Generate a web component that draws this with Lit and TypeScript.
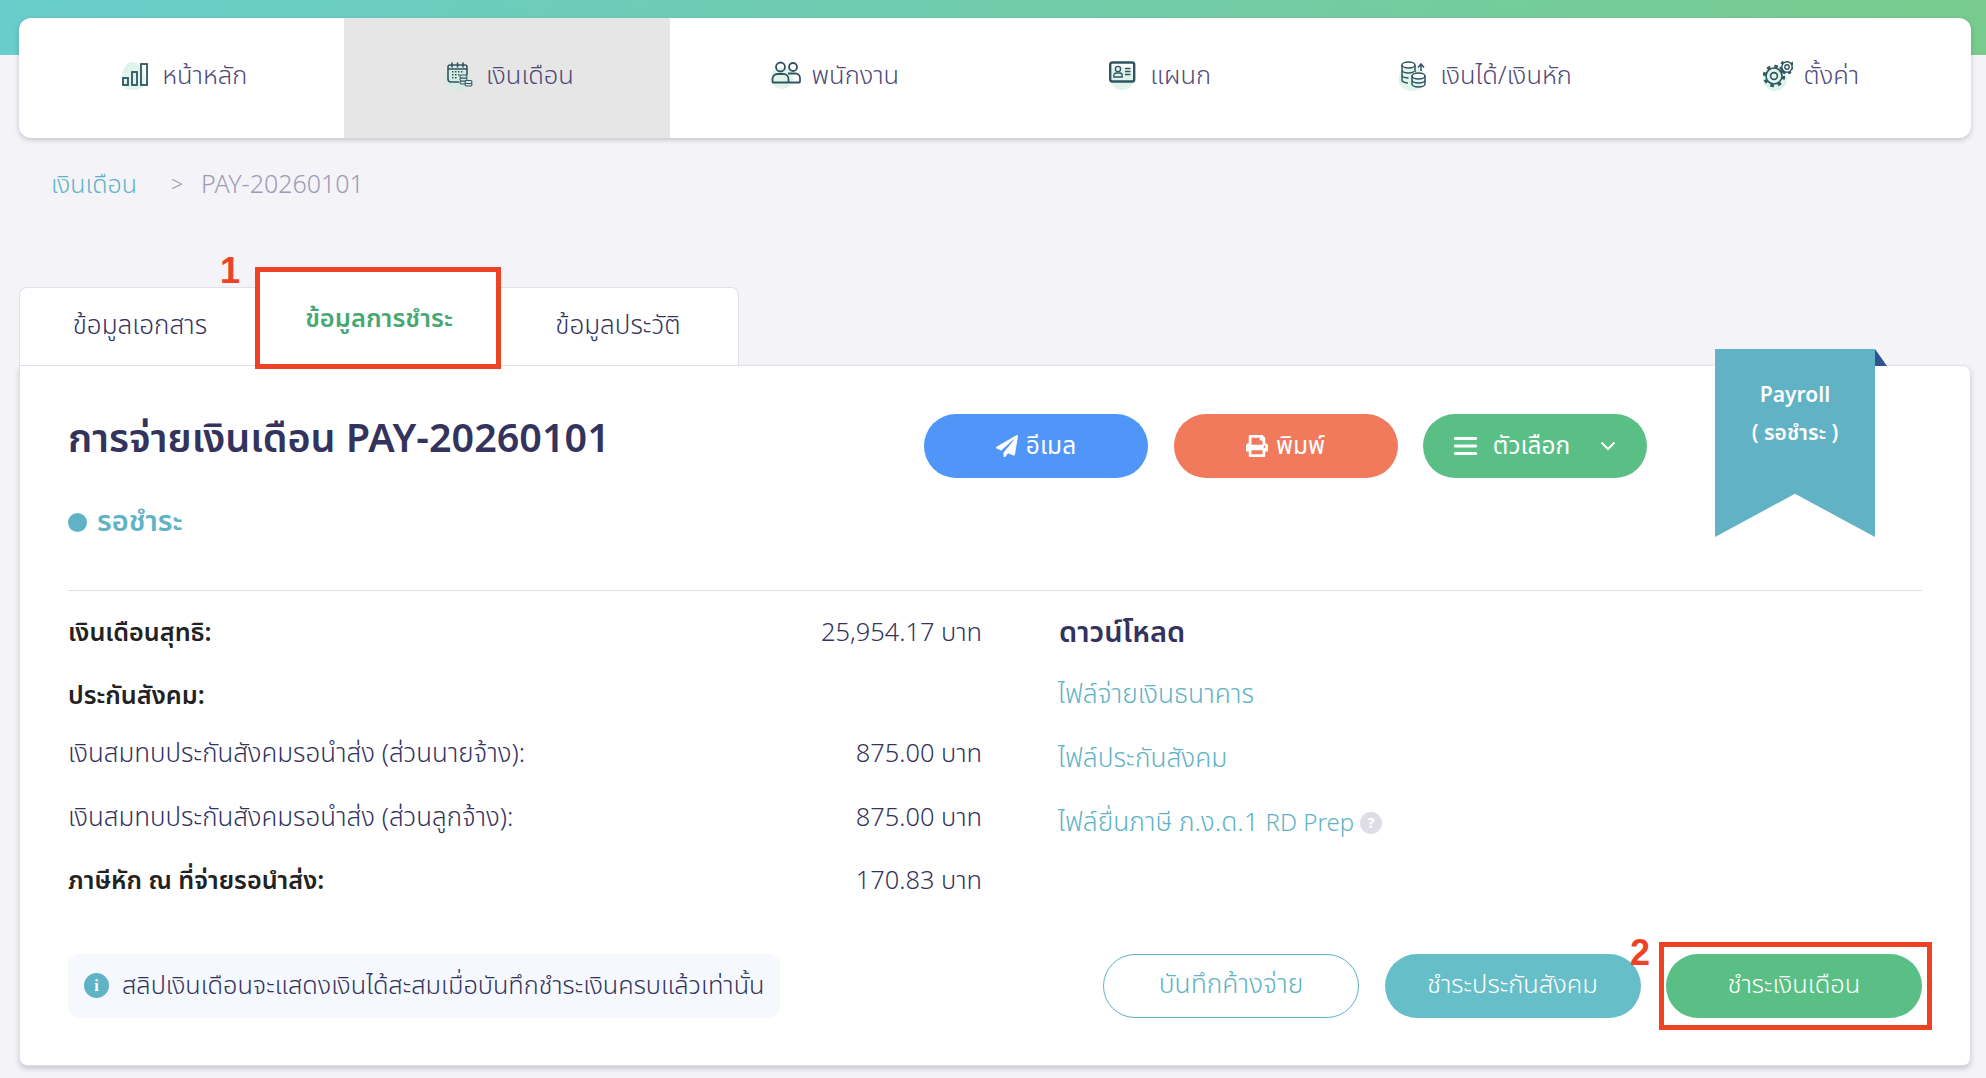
import { LitElement, html, css, svg } from "lit";
import { customElement } from "lit/decorators.js";

const ink = "#2f5560";

const icons = {
  home: svg`<path class="blob" d="M1 20C0 10 5 1 11 1s12 8 13 15-3 13-11 13S2 27 1 20z"/>
    <g fill="none" stroke="${ink}" stroke-width="1.800"><rect x="2" y="17" width="5" height="7"/><rect x="11" y="11" width="5" height="13"/><rect x="20" y="3" width="6" height="21"/></g>`,
  salary: svg`<path class="blob" d="M0 18C0 10 8 7 15 9s12 7 9 13-8 8-13 7-11-4-11-11z"/>
    <g fill="none" stroke="${ink}" stroke-width="1.600"><path d="M14 21H6a3 3 0 0 1-3-3V6a2 2 0 0 1 2-2h15a2 2 0 0 1 2 2v8"/><path d="M3 8h19M7 1.500v5M12.500 1.500v5M18 1.500v5"/></g>
    <g fill="${ink}"><rect x="7" y="10" width="1.500" height="1.500"/><rect x="10" y="10" width="1.500" height="1.500"/><rect x="13" y="10" width="1.500" height="1.500"/><rect x="16" y="10" width="1.500" height="1.500"/><rect x="7" y="13" width="1.500" height="1.500"/><rect x="10" y="13" width="1.500" height="1.500"/><rect x="13" y="13" width="1.500" height="1.500"/><rect x="7" y="16" width="1.500" height="1.500"/><rect x="10" y="16" width="1.500" height="1.500"/></g>
    <g fill="#dfe8e6" stroke="${ink}" stroke-width="1.100"><rect x="15" y="20" width="7" height="3" rx="1.500"/><rect x="15" y="17" width="7" height="3" rx="1.500"/><rect x="15" y="14" width="7" height="3" rx="1.500"/><rect x="20" y="22" width="7" height="3" rx="1.500"/><rect x="20" y="19.500" width="7" height="3" rx="1.500"/></g>`,
  staff: svg`<ellipse class="blob" cx="11" cy="17" rx="11" ry="11"/>
    <g fill="none" stroke="${ink}" stroke-width="1.800"><circle cx="9.500" cy="6" r="4.500"/><path d="M1.500 21v-3a5 5 0 0 1 5-5h6a5 5 0 0 1 5 5v3a.5.5 0 0 1-.5.5H2z"/><circle cx="22" cy="6" r="4"/><path d="M17 12.500h7.500a4.500 4.500 0 0 1 4.500 4.500v3.500a1 1 0 0 1-1 1H18"/></g>`,
  dept: svg`<path class="blob" d="M0 15C0 7 6 5 13 6s14 3 13 11-6 12-13 12S0 23 0 15z"/>
    <rect x="1.200" y="1.500" width="24" height="19" rx="2" fill="none" stroke="${ink}" stroke-width="2.400"/>
    <g fill="none" stroke="${ink}" stroke-width="1.300"><circle cx="9" cy="8" r="2.600"/><path d="M4.800 16v-1.500a2.500 2.500 0 0 1 2.500-2.500h3.400a2.500 2.500 0 0 1 2.500 2.500V16z"/><path d="M16 7.500h5.500M16 10.500h5.500M16 13.500h5.500"/></g>`,
  income: svg`<ellipse class="blob" cx="13" cy="18" rx="14" ry="12"/>
    <g fill="none" stroke="${ink}" stroke-width="1.500"><ellipse cx="9.500" cy="4" rx="6.500" ry="3"/><path d="M3 4v15c0 1.500 2.500 2.800 6 3M16 4v7M3 9c0 1.700 3 3 6.500 3 2.500 0 4.500-.5 5.500-1.500M3 14c0 1.700 3 3 6.500 3"/>
    <ellipse cx="19.500" cy="15" rx="6.500" ry="3" fill="#f4f8f6"/><path d="M13 15v8c0 1.700 3 3 6.500 3s6.500-1.300 6.500-3v-8M13 19c0 1.700 3 3 6.500 3s6.500-1.300 6.500-3"/><path d="M22 10V4.500M19 6.500l3-3.500 3 3.500"/></g>`,
  gear: svg`<ellipse class="blob" cx="12" cy="18" rx="12" ry="12"/>
    <g fill="none" stroke="${ink}"><circle cx="11" cy="15" r="8" stroke-width="1.600"/><circle cx="11" cy="15" r="9.800" stroke-width="2.800" stroke-dasharray="3.600 4.100"/><circle cx="11" cy="15" r="3.400" stroke-width="1.600"/>
    <circle cx="24" cy="6" r="5.200" stroke-width="1.400"/><circle cx="24" cy="6" r="6.400" stroke-width="2.200" stroke-dasharray="2.800 2.900"/><circle cx="24" cy="6" r="2.200" stroke-width="1.400"/></g>`,
};

const navItems = [
  { label: "หน้าหลัก", icon: icons.home },
  { label: "เงินเดือน", icon: icons.salary, active: true },
  { label: "พนักงาน", icon: icons.staff },
  { label: "แผนก", icon: icons.dept },
  { label: "เงินได้/เงินหัก", icon: icons.income },
  { label: "ตั้งค่า", icon: icons.gear },
];

const rows = [
  { label: "เงินเดือนสุทธิ:", value: "25,954.17 บาท", bold: true },
  { label: "ประกันสังคม:", value: "", bold: true },
  { label: "เงินสมทบประกันสังคมรอนำส่ง (ส่วนนายจ้าง):", value: "875.00 บาท" },
  { label: "เงินสมทบประกันสังคมรอนำส่ง (ส่วนลูกจ้าง):", value: "875.00 บาท" },
  { label: "ภาษีหัก ณ ที่จ่ายรอนำส่ง:", value: "170.83 บาท", bold: true },
];

@customElement("app-root")
export class AppRoot extends LitElement {
  static styles = css`
    :host {
      display: block;
      box-sizing: border-box;
      min-height: 1078px;
      padding: 18px 15px 0 19px;
      background: linear-gradient(90deg, #69cdcb, #78cb8d) no-repeat top / 100% 55px, #f3f3f8;
      font-family: "Noto Sans Thai", "Noto Sans", "Liberation Sans", sans-serif;
      color: #33335d;
      position: relative;
      overflow: hidden;
    }

    /* Nav */
    .nav {
      display: grid;
      grid-template-columns: repeat(6, 1fr);
      height: 120px;
      background: #fff;
      border-radius: 12px;
      overflow: hidden;
      box-shadow: 0 2px 5px rgba(60, 60, 80, 0.25);
    }
    .nav-item {
      --blob: #e1f4eb;
      display: flex;
      align-items: center;
      justify-content: center;
      gap: 11px;
      padding: 0 0 4px 5px;
      font-size: 25.500px;
      font-weight: 300;
      color: #4f4a78;
    }
    .nav-item.active {
      --blob: #d6ebe0;
      background: #e6e6e6;
    }
    .nav-item svg {
      width: 30px;
      height: 30px;
      flex: none;
    }
    .blob {
      fill: var(--blob);
    }

    /* Breadcrumb */
    .crumbs {
      display: flex;
      align-items: center;
      height: 40px;
      margin-top: 27px;
      padding-left: 32px;
      font-size: 25px;
      font-weight: 300;
      color: #9d9bb3;
    }
    .crumbs a {
      color: #5fb3c5;
    }
    .crumbs .sep {
      margin: 0 18px 0 34px;
      font-size: 21px;
    }

    /* Tabs */
    .tabs {
      display: grid;
      grid-template-columns: 241px 238px 241px;
      align-items: end;
      width: 720px;
      height: 96px;
      margin-top: 65px;
      position: relative;
      z-index: 1;
    }
    .tab {
      display: flex;
      align-items: center;
      justify-content: center;
      height: 79px;
      box-sizing: border-box;
      padding-bottom: 1px;
      background: #fff;
      border: 1px solid #e0e0ea;
      font-size: 26px;
      font-weight: 300;
      color: #33335d;
    }
    .tab:first-child {
      border-radius: 8px 0 0 0;
      border-right: 0;
    }
    .tab:last-child {
      border-radius: 0 8px 0 0;
      border-left: 0;
    }
    .tab.active {
      height: 95px;
      padding: 1px 0 0;
      border: 0;
      font-size: 25.500px;
      font-weight: 600;
      color: #48a874;
    }

    /* Card */
    .card {
      height: 701px;
      box-sizing: border-box;
      margin-top: -1px;
      padding: 48px 48px 47px;
      background: #fff;
      border: 1px solid #e0e0ea;
      border-radius: 0 8px 8px 8px;
      box-shadow: 0 3px 5px rgba(60, 60, 80, 0.22);
      display: flex;
      flex-direction: column;
    }
    .head {
      display: flex;
      justify-content: space-between;
      height: 177px;
      flex: none;
      box-sizing: border-box;
      border-bottom: 1px solid #dfdfe6;
    }
    h1 {
      margin: 1px 0 0;
      font-size: 39.500px;
      line-height: 50px;
      font-weight: 600;
    }
    .status {
      display: flex;
      align-items: center;
      gap: 10px;
      margin-top: 37px;
      font-size: 29px;
      line-height: 40px;
      font-weight: 600;
      color: #5fb3c5;
    }
    .status i {
      width: 19px;
      height: 19px;
      border-radius: 50%;
      background: #5fb3c5;
    }
    .actions {
      display: flex;
      gap: 25.500px;
      margin-right: 275px;
    }
    .btn {
      display: flex;
      align-items: center;
      justify-content: center;
      gap: 8px;
      box-sizing: border-box;
      height: 64px;
      border-radius: 32px;
      font-size: 25.500px;
      color: #fff;
    }
    .actions .btn {
      width: 224px;
      font-size: 24.500px;
    }
    .blue { background: #5096f9; }
    .orange { background: #f1795c; }
    .green { background: #5abf85; }
    .teal { background: #66bec8; }
    .outline {
      border: 1px solid #5fb3c5;
      color: #5fb3c5;
      background: #fff;
    }
    .opt-label {
      margin: 0 22px 0 8px;
    }

    /* Details */
    .body {
      display: grid;
      grid-template-columns: 914px 1fr;
      column-gap: 76px;
      margin-top: 11px;
    }
    .row {
      display: flex;
      justify-content: space-between;
      align-items: center;
      height: 62px;
      font-size: 25.900px;
      font-weight: 300;
    }
    .row:nth-child(2) { margin-top: 1px; }
    .row:nth-child(3) { margin-top: -4px; }
    .row:nth-child(4) { margin-top: 2px; }
    .row:nth-child(5) { margin-top: 1px; }
    .row b {
      font-size: 25.200px;
      font-weight: 600;
      color: #222;
    }
    .row .amount {
      font-size: 25.400px;
    }
    .downloads h2 {
      margin: 0 0 0 1px;
      height: 61px;
      line-height: 63px;
      font-size: 29px;
      font-weight: 600;
    }
    .downloads a {
      display: flex;
      align-items: center;
      gap: 6px;
      height: 64px;
      font-size: 26.300px;
      font-weight: 300;
      color: #5fb3c5;
    }
    .downloads a small {
      font-size: 24px;
    }
    .help {
      display: flex;
      align-items: center;
      justify-content: center;
      width: 22px;
      height: 22px;
      border-radius: 50%;
      background: #dddde8;
      color: #fff;
      font-size: 15px;
      font-weight: 700;
    }

    /* Footer */
    .foot {
      display: flex;
      justify-content: space-between;
      align-items: center;
      margin-top: auto;
    }
    .note {
      display: flex;
      align-items: center;
      gap: 13px;
      width: 712px;
      height: 64px;
      box-sizing: border-box;
      padding: 0 0 1px 16px;
      border-radius: 12px;
      background: #f5f8fd;
      font-size: 25.300px;
      font-weight: 300;
      white-space: nowrap;
    }
    .note i {
      flex: none;
      display: flex;
      align-items: center;
      justify-content: center;
      width: 25px;
      height: 25px;
      border-radius: 50%;
      background: #5fb3c5;
      color: #fff;
      font: 700 16px "Liberation Serif", serif;
    }
    .foot-actions {
      display: flex;
      gap: 25.500px;
    }
    .foot-actions .btn {
      width: 256px;
      padding-bottom: 2px;
      font-weight: 300;
    }
    .foot-actions .outline {
      font-size: 26.400px;
    }

    /* Ribbon and annotations, laid over the page */
    .ribbon {
      position: absolute;
      left: 1715px;
      top: 349px;
      width: 160px;
      height: 188px;
      z-index: 2;
      background: #60b2c4;
      clip-path: polygon(0 0, 100% 0, 100% 100%, 50% 77%, 0 100%);
      color: #fff;
      text-align: center;
      font-size: 21px;
      font-weight: 600;
      line-height: 38px;
      padding-top: 28px;
      box-sizing: border-box;
    }
    .fold {
      position: absolute;
      left: 1875px;
      top: 349px;
      width: 12px;
      height: 17px;
      z-index: 2;
      background: #2e5590;
      clip-path: polygon(0 0, 100% 100%, 0 100%);
    }
    .mark {
      position: absolute;
      z-index: 3;
      box-sizing: border-box;
      border: 5px solid #ee4225;
    }
    .mark.one {
      left: 255px;
      top: 267px;
      width: 246px;
      height: 102px;
    }
    .mark.two {
      left: 1659px;
      top: 942px;
      width: 273px;
      height: 88px;
    }
    .num {
      position: absolute;
      z-index: 3;
      font: 700 36px/1 "Liberation Sans", sans-serif;
      color: #ee4225;
    }
    .num.one {
      left: 220px;
      top: 253px;
    }
    .num.two {
      left: 1630px;
      top: 935px;
    }
  `;

  render() {
    return html`
      <nav class="nav">
        ${navItems.map(
          (item) => html`
            <div class="nav-item ${item.active ? "active" : ""}">
              <svg viewBox="0 0 30 30">${item.icon}</svg>
              <span>${item.label}</span>
            </div>
          `
        )}
      </nav>

      <div class="crumbs">
        <a>เงินเดือน</a><span class="sep">&gt;</span><span>PAY-20260101</span>
      </div>

      <div class="tabs">
        <div class="tab">ข้อมูลเอกสาร</div>
        <div class="tab active">ข้อมูลการชำระ</div>
        <div class="tab">ข้อมูลประวัติ</div>
      </div>

      <section class="card">
        <div class="head">
          <div>
            <h1>การจ่ายเงินเดือน PAY-20260101</h1>
            <div class="status"><i></i>รอชำระ</div>
          </div>
          <div class="actions">
            <div class="btn blue">
              <svg width="22" height="22" viewBox="0 0 512 512" fill="#fff"><path d="M476 3.200L12.500 270.600c-18.100 10.400-15.800 35.600 2.200 43.200L121 358.400l287.300-253.200c5.500-4.900 13.300 2.600 8.600 8.300L176 407v80.500c0 23.600 28.500 32.900 42.500 15.800L282 426l124.600 52.200c14.200 6 30.400-2.900 33-18.200l72-432C515 7.800 493.300-6.800 476 3.200z"/></svg>
              อีเมล
            </div>
            <div class="btn orange">
              <svg width="22" height="22" viewBox="0 0 512 512" fill="#fff"><path d="M448 192V77.250c0-8.490-3.370-16.620-9.370-22.630L393.370 9.370c-6-6-14.140-9.370-22.630-9.370H96C78.330 0 64 14.330 64 32v160c-35.350 0-64 28.650-64 64v112c0 8.840 7.160 16 16 16h48v96c0 17.670 14.330 32 32 32h320c17.670 0 32-14.330 32-32v-96h48c8.840 0 16-7.160 16-16V256c0-35.350-28.650-64-64-64zm-64 256H128v-96h256v96zm0-224H128V64h192v48c0 8.840 7.160 16 16 16h48v96zm48 72c-13.250 0-24-10.750-24-24 0-13.260 10.750-24 24-24s24 10.740 24 24c0 13.250-10.750 24-24 24z"/></svg>
              พิมพ์
            </div>
            <div class="btn green">
              <svg width="23" height="18" viewBox="0 0 23 18" fill="#fff"><rect width="23" height="3" rx="1"/><rect y="7.500" width="23" height="3" rx="1"/><rect y="15" width="23" height="3" rx="1"/></svg>
              <span class="opt-label">ตัวเลือก</span>
              <svg width="16" height="10" viewBox="0 0 16 10" fill="none" stroke="#fff" stroke-width="2"><path d="M1.500 1.500L8 8l6.500-6.500"/></svg>
            </div>
          </div>
        </div>

        <div class="body">
          <div>
            ${rows.map(
              (r) => html`
                <div class="row">
                  ${r.bold ? html`<b>${r.label}</b>` : html`<span>${r.label}</span>`}
                  <span class="amount">${r.value}</span>
                </div>
              `
            )}
          </div>
          <div class="downloads">
            <h2>ดาวน์โหลด</h2>
            <a>ไฟล์จ่ายเงินธนาคาร</a>
            <a>ไฟล์ประกันสังคม</a>
            <a><span>ไฟล์ยื่นภาษี ภ.ง.ด.1 <small>RD Prep</small></span><span class="help">?</span></a>
          </div>
        </div>

        <div class="foot">
          <div class="note"><i>i</i>สลิปเงินเดือนจะแสดงเงินได้สะสมเมื่อบันทึกชำระเงินครบแล้วเท่านั้น</div>
          <div class="foot-actions">
            <div class="btn outline">บันทึกค้างจ่าย</div>
            <div class="btn teal">ชำระประกันสังคม</div>
            <div class="btn green">ชำระเงินเดือน</div>
          </div>
        </div>
      </section>

      <div class="ribbon">Payroll<br />( รอชำระ )</div>
      <div class="fold"></div>
      <div class="mark one"></div>
      <div class="num one">1</div>
      <div class="mark two"></div>
      <div class="num two">2</div>
    `;
  }
}
